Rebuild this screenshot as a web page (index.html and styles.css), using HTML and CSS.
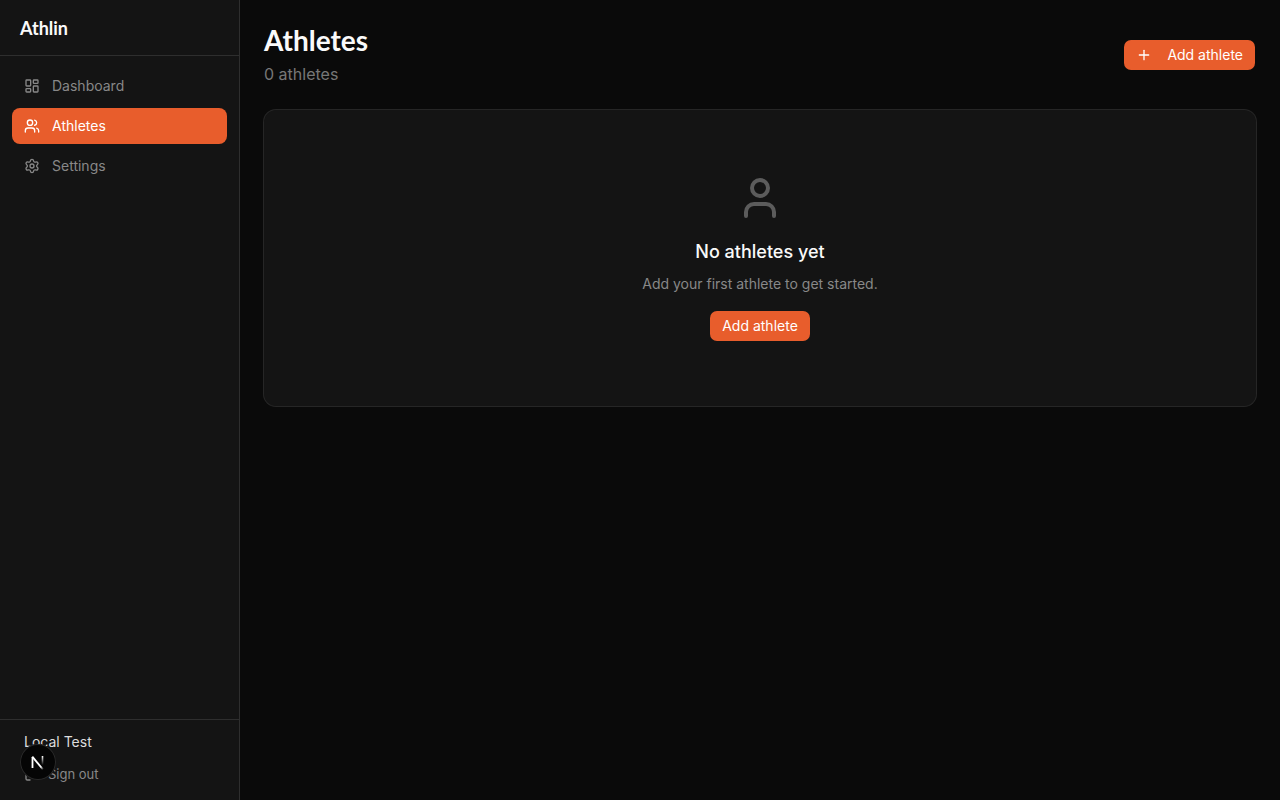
FILE: index.html
```html
<!DOCTYPE html>
<html lang="en">
<head>
  <meta charset="UTF-8" />
  <meta name="viewport" content="width=device-width, initial-scale=1.0"/>
  <title>Athletes - Athlin</title>
  <link rel="stylesheet" href="styles.css">
</head>
<body>
  <div class="app">
    <aside class="sidebar">
      <div class="brand"><a href="#">Athlin</a></div>

      <nav class="nav">
        <a href="#" class="nav-link">
          <svg class="icon" viewBox="0 0 24 24">
            <rect x="3" y="3" width="7" height="9" rx="1"/>
            <rect x="14" y="3" width="7" height="5" rx="1"/>
            <rect x="14" y="12" width="7" height="9" rx="1"/>
            <rect x="3" y="16" width="7" height="5" rx="1"/>
          </svg>
          Dashboard
        </a>
        <a href="#" class="nav-link active">
          <svg class="icon" viewBox="0 0 24 24">
            <path d="M16 21v-2a4 4 0 0 0-4-4H6a4 4 0 0 0-4 4v2"/>
            <circle cx="9" cy="7" r="4"/>
            <path d="M22 21v-2a4 4 0 0 0-3-3.87"/>
            <path d="M16 3.13a4 4 0 0 1 0 7.75"/>
          </svg>
          Athletes
        </a>
        <a href="#" class="nav-link">
          <svg class="icon" viewBox="0 0 24 24">
            <path d="M9.671 4.136a2.34 2.34 0 0 1 4.659 0 2.34 2.34 0 0 0 3.319 1.915 2.34 2.34 0 0 1 2.33 4.033 2.34 2.34 0 0 0 0 3.831 2.34 2.34 0 0 1-2.33 4.033 2.34 2.34 0 0 0-3.319 1.915 2.34 2.34 0 0 1-4.659 0 2.34 2.34 0 0 0-3.32-1.915 2.34 2.34 0 0 1-2.33-4.033 2.34 2.34 0 0 0 0-3.831A2.34 2.34 0 0 1 6.35 6.051a2.34 2.34 0 0 0 3.319-1.915"/>
            <circle cx="12" cy="12" r="3"/>
          </svg>
          Settings
        </a>
      </nav>

      <div class="account">
        <p class="account-name">Local Test</p>
        <button type="button" class="sign-out">
          <svg class="icon" viewBox="0 0 24 24">
            <path d="M9 21H5a2 2 0 0 1-2-2V5a2 2 0 0 1 2-2h4"/>
            <path d="m16 17 5-5-5-5"/>
            <path d="M21 12H9"/>
          </svg>
          Sign out
        </button>
      </div>
    </aside>

    <main class="main">
      <header class="page-header">
        <div>
          <h1>Athletes</h1>
          <p class="count">0 athletes</p>
        </div>
        <button type="button" class="btn btn-icon">
          <svg class="icon" viewBox="0 0 24 24">
            <path d="M5 12h14"/>
            <path d="M12 5v14"/>
          </svg>
          Add athlete
        </button>
      </header>

      <section class="card">
        <svg class="icon empty-icon" viewBox="0 0 24 24">
          <path d="M19 21v-2a4 4 0 0 0-4-4H9a4 4 0 0 0-4 4v2"/>
          <circle cx="12" cy="7" r="4"/>
        </svg>
        <h2>No athletes yet</h2>
        <p class="hint">Add your first athlete to get started.</p>
        <button type="button" class="btn">Add athlete</button>
      </section>
    </main>
  </div>

  <button type="button" class="dev-badge" aria-label="Open dev tools">
    <svg viewBox="0 0 36 36">
      <defs>
        <linearGradient id="diagonal" x1="18" y1="18" x2="24" y2="25" gradientUnits="userSpaceOnUse">
          <stop stop-color="#fff"/>
          <stop offset="0.6" stop-color="#fff"/>
          <stop offset="1" stop-color="#fff" stop-opacity="0"/>
        </linearGradient>
        <linearGradient id="stem" x1="0" y1="12" x2="0" y2="21" gradientUnits="userSpaceOnUse">
          <stop stop-color="#fff"/>
          <stop offset="1" stop-color="#fff" stop-opacity="0"/>
        </linearGradient>
      </defs>
      <path d="M12.5 24V13" stroke="#fff" stroke-width="1.8"/>
      <path d="M12.3 12.6 23 25.5" stroke="url(#diagonal)" stroke-width="1.9"/>
      <path d="M22.5 12V21" stroke="url(#stem)" stroke-width="1.6"/>
    </svg>
  </button>
</body>
</html>
```

FILE: styles.css
```css
* { margin: 0; padding: 0; box-sizing: border-box; }

body {
  font-family: 'Inter', sans-serif;
  font-size: 14px;
  line-height: 20px;
  background-color: #0a0a0a;
  color: #fafafa;
}

a {
  color: inherit;
  text-decoration: none;
}

button {
  font: inherit;
  cursor: pointer;
}

.app {
  display: flex;
  min-height: 100vh;
}

.icon {
  width: 16px;
  height: 16px;
  flex-shrink: 0;
  fill: none;
  stroke: currentColor;
  stroke-width: 2;
  stroke-linecap: round;
  stroke-linejoin: round;
}

.sidebar {
  display: flex;
  flex-direction: column;
  width: 240px;
  flex-shrink: 0;
  background-color: #141414;
  border-right: 1px solid #2e2e2e;
}

.brand {
  display: flex;
  align-items: center;
  height: 56px;
  padding: 0 20px;
  border-bottom: 1px solid #2e2e2e;
  font-family: 'Lato', sans-serif;
  font-size: 18px;
  font-weight: 700;
}

.nav {
  flex: 1;
  display: flex;
  flex-direction: column;
  gap: 4px;
  padding: 12px;
}

.nav-link {
  display: flex;
  align-items: center;
  gap: 12px;
  padding: 8px 12px;
  border-radius: 8px;
  color: #888;
}

.nav-link.active {
  background-color: #e85d2c;
  color: #fff;
}

.account {
  padding: 12px 24px;
  border-top: 1px solid #2e2e2e;
}

.account-name {
  margin-bottom: 8px;
  color: #ddd;
}

.sign-out {
  display: flex;
  align-items: center;
  gap: 8px;
  padding: 4px 0;
  font-size: 13px;
  background: none;
  border: none;
  color: #888;
}

.main {
  flex: 1;
  padding: 24px;
}

.page-header {
  display: flex;
  align-items: center;
  justify-content: space-between;
  margin-bottom: 24px;
}

h1 {
  margin-bottom: 6px;
  font-family: 'Lato', sans-serif;
  font-size: 28px;
  font-weight: 700;
  line-height: 32px;
}

.count {
  font-size: 16px;
  line-height: 24px;
  color: #777;
}

.btn {
  height: 32px;
  padding: 0 12px;
  background-color: #e85d2c;
  background-clip: padding-box;
  border: 1px solid transparent;
  border-radius: 8px;
  color: #fff;
}

.btn-icon {
  display: flex;
  align-items: center;
  gap: 15px;
}

.card {
  display: flex;
  flex-direction: column;
  align-items: center;
  padding: 64px 16px;
  background-color: #141414;
  border-radius: 12px;
  box-shadow: 0 0 0 1px #262626;
}

.empty-icon {
  width: 48px;
  height: 48px;
  margin-bottom: 16px;
  color: #5c5c5c;
}

h2 {
  margin-bottom: 8px;
  font-size: 18px;
  font-weight: 500;
  line-height: 28px;
}

.hint {
  margin-bottom: 16px;
  color: #888;
}

.dev-badge {
  position: fixed;
  left: 20px;
  bottom: 20px;
  width: 36px;
  height: 36px;
  background-color: #050505;
  border: none;
  border-radius: 50%;
  box-shadow: inset 0 0 0 1px #2a2a2a;
}

.dev-badge svg {
  display: block;
  width: 36px;
  height: 36px;
}
```
